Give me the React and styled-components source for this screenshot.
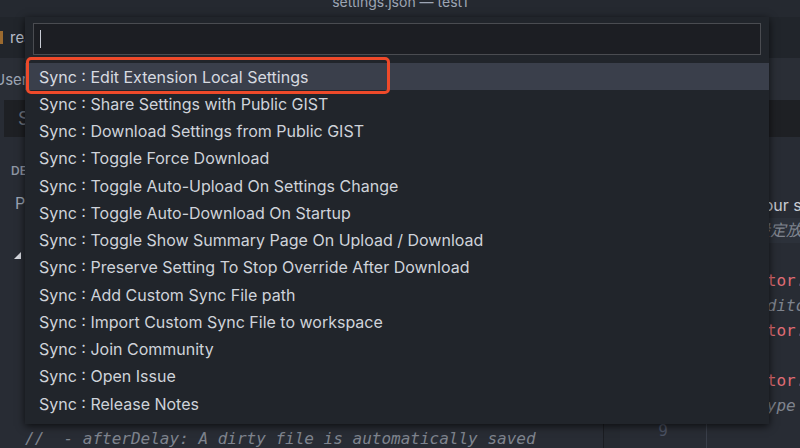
import styled, { createGlobalStyle } from 'styled-components';

const commands = [
    'Sync : Edit Extension Local Settings',
    'Sync : Share Settings with Public GIST',
    'Sync : Download Settings from Public GIST',
    'Sync : Toggle Force Download',
    'Sync : Toggle Auto-Upload On Settings Change',
    'Sync : Toggle Auto-Download On Startup',
    'Sync : Toggle Show Summary Page On Upload / Download',
    'Sync : Preserve Setting To Stop Override After Download',
    'Sync : Add Custom Sync File path',
    'Sync : Import Custom Sync File to workspace',
    'Sync : Join Community',
    'Sync : Open Issue',
    'Sync : Release Notes',
];

const rightLines = [
    { text: '', kind: 'plain' },
    { text: '', kind: 'plain' },
    { text: 'Place your settings here', kind: 'note' },
    { text: '// 將設定放置於此處', kind: 'comment', band: true },
    { text: '', kind: 'plain' },
    { text: '  "editor.fontSize": 14,', kind: 'key' },
    { text: '  // editor', kind: 'comment' },
    { text: '  "editor.tabSize": 2,', kind: 'key' },
    { text: '', kind: 'plain' },
    { text: '  "editor.wordWrap": "on",', kind: 'key' },
    { text: '  // type', kind: 'comment' },
    { text: '', kind: 'plain' },
    { text: '  "files.autoSave": "off",', kind: 'key' },
];

export default function App() {
    return (
        <>
            <GlobalStyle />
            <Window>
                <TitleBar>
                    <Title>settings.json — test1</Title>
                </TitleBar>
                <Workspace>
                    <LeftPane>
                        <TabBar>
                            <Tab>
                                <FileIcon />
                                readme.md
                            </Tab>
                        </TabBar>
                        <Header>User Settings</Header>
                        <SearchRow>
                            <SearchBox>Search Settings</SearchBox>
                        </SearchRow>
                        <Content>
                            <SectionLabel>DEFAULT SETTINGS</SectionLabel>
                            <Group>Place your settings in the right hand side editor</Group>
                            <Spacer height={39} />
                            <Twisty />
                            <Spacer height={170} />
                            <CodeLine>//  - afterDelay: A dirty file is automatically saved</CodeLine>
                        </Content>
                    </LeftPane>
                    <ScrollTrack />
                    <RightPane>
                        <TabBar>
                            <Tab>Projects</Tab>
                        </TabBar>
                        <Header />
                        <DarkRow />
                        <Editor>
                            <Gutter>
                                {rightLines.map((line, i) => (
                                    <LineNo key={i}>{i > 2 ? i - 2 : ''}</LineNo>
                                ))}
                            </Gutter>
                            <Code>
                                {rightLines.map((line, i) => (
                                    <CodeRow key={i} kind={line.kind} band={line.band}>
                                        {line.text}
                                    </CodeRow>
                                ))}
                            </Code>
                        </Editor>
                    </RightPane>
                </Workspace>

                <Palette>
                    <InputBox>
                        <Caret />
                    </InputBox>
                    <List>
                        {commands.map((command, i) => (
                            <Item key={command} active={i === 0}>{command}</Item>
                        ))}
                    </List>
                    <Marker />
                </Palette>
            </Window>
        </>
    );
}

const GlobalStyle = createGlobalStyle`
    html, body {
        margin: 0;
        padding: 0;
        background: #282c34;
        overflow: hidden;
    }
`;

const Window = styled.div`
    position: relative;
    width: 800px;
    height: 448px;
    overflow: hidden;
    display: flex;
    flex-direction: column;
    background: #282c34;
    font-family: Inter, "Noto Sans", sans-serif;
`;

const TitleBar = styled.div`
    height: 17px;
    flex-shrink: 0;
    display: flex;
    justify-content: center;
    overflow: hidden;
    background: #252930;
`;

const Title = styled.div`
    margin-top: -7px;
    font-size: 14px;
    line-height: 18px;
    color: #9da5b4;
`;

const Workspace = styled.div`
    flex: 1;
    display: flex;
    min-height: 0;
`;

const LeftPane = styled.div`
    width: 603px;
    display: flex;
    flex-direction: column;
    overflow: hidden;
`;

const RightPane = styled.div`
    flex: 1;
    display: flex;
    flex-direction: column;
    overflow: hidden;
`;

const ScrollTrack = styled.div`
    width: 16px;
    border-left: 1px solid #1b1d22;
    background: #262a31;
`;

const TabBar = styled.div`
    height: 41px;
    flex-shrink: 0;
    display: flex;
    align-items: center;
    background: #21252b;
`;

const Tab = styled.div`
    display: flex;
    align-items: center;
    gap: 7px;
    font-size: 15px;
    color: #b9bfca;
    white-space: nowrap;
`;

const FileIcon = styled.span`
    width: 3px;
    height: 13px;
    background: #9b6a2f;
`;

const Header = styled.div`
    height: 42px;
    flex-shrink: 0;
    display: flex;
    align-items: center;
    margin-left: -6px;
    font-size: 15px;
    color: #9da5b4;
    background: #2a2e36;
    white-space: nowrap;
`;

const SearchRow = styled.div`
    height: 37px;
    flex-shrink: 0;
    display: flex;
    padding-left: 4px;
    background: #282c34;
`;

const SearchBox = styled.div`
    flex: 1;
    display: flex;
    align-items: center;
    padding-left: 14px;
    font-size: 18px;
    color: #6b717d;
    background: #1e2024;
    white-space: nowrap;
`;

const DarkRow = styled.div`
    height: 37px;
    flex-shrink: 0;
    background: #1e2024;
`;

const Content = styled.div`
    flex: 1;
    display: flex;
    flex-direction: column;
    padding: 26px 0 0 11px;
`;

const SectionLabel = styled.div`
    font-size: 12px;
    font-weight: 600;
    color: #8f96a3;
    white-space: nowrap;
`;

const Group = styled.div`
    margin: 15px 0 0 4px;
    font-size: 16px;
    color: #9da5b4;
    white-space: nowrap;
`;

const Spacer = styled.div`
    height: ${(p) => p.height}px;
    flex-shrink: 0;
`;

const Twisty = styled.div`
    margin-left: 3px;
    width: 0;
    height: 0;
    border-left: 7px solid transparent;
    border-bottom: 7px solid #d7dae0;
`;

const CodeLine = styled.div`
    margin-left: 14px;
    font-family: "DejaVu Sans Mono", "Liberation Mono", monospace;
    font-style: italic;
    font-size: 16px;
    color: #7f848e;
    white-space: pre;
`;

const Editor = styled.div`
    flex: 1;
    display: flex;
    font-family: "DejaVu Sans Mono", "Liberation Mono", "Noto Sans CJK TC", monospace;
    font-size: 16px;
`;

const Gutter = styled.div`
    width: 86px;
    flex-shrink: 0;
    border-right: 1px solid #3a3f4a;
    padding-top: 6px;
`;

const LineNo = styled.div`
    height: 25px;
    line-height: 25px;
    text-align: center;
    color: #4b5263;
`;

const Code = styled.div`
    flex: 1;
    padding: 6px 0 0 2px;
`;

const CodeRow = styled.div`
    height: 25px;
    line-height: 25px;
    white-space: pre;
    font-family: ${(p) => (p.kind === 'note' ? 'Inter, "Noto Sans", sans-serif' : 'inherit')};
    color: ${(p) => (p.kind === 'key' ? '#e06c75' : p.kind === 'comment' ? '#7f848e' : '#c8ccd4')};
    font-style: ${(p) => (p.kind === 'comment' ? 'italic' : 'normal')};
    background: ${(p) => (p.band ? '#2c313a' : 'transparent')};
`;

const Palette = styled.div`
    position: absolute;
    left: 25px;
    top: 17px;
    width: 744px;
    height: 407px;
    box-sizing: border-box;
    padding: 6px 8px 0 8px;
    background: #21252b;
    box-shadow: 0 2px 8px rgba(0, 0, 0, 0.7);
    display: flex;
    flex-direction: column;
`;

const InputBox = styled.div`
    height: 32px;
    box-sizing: border-box;
    display: flex;
    align-items: center;
    padding-left: 6px;
    background: #1c1e23;
    border: 1px solid #4a4c51;
`;

const Caret = styled.span`
    width: 1px;
    height: 18px;
    background: #c8ccd4;
`;

const List = styled.div`
    margin: 8px -8px 0 -8px;
    display: flex;
    flex-direction: column;
`;

const Item = styled.div`
    height: 27.25px;
    display: flex;
    align-items: center;
    padding-left: 14px;
    font-size: 16px;
    color: ${(p) => (p.active ? '#d7dae0' : '#cfd3da')};
    background: ${(p) => (p.active ? '#3a3f4b' : 'transparent')};
    white-space: nowrap;
`;

const Marker = styled.div`
    position: absolute;
    left: 1px;
    top: 40px;
    width: 364px;
    height: 37px;
    box-sizing: border-box;
    border: 3px solid #ee4a2a;
    border-radius: 5px;
`;
